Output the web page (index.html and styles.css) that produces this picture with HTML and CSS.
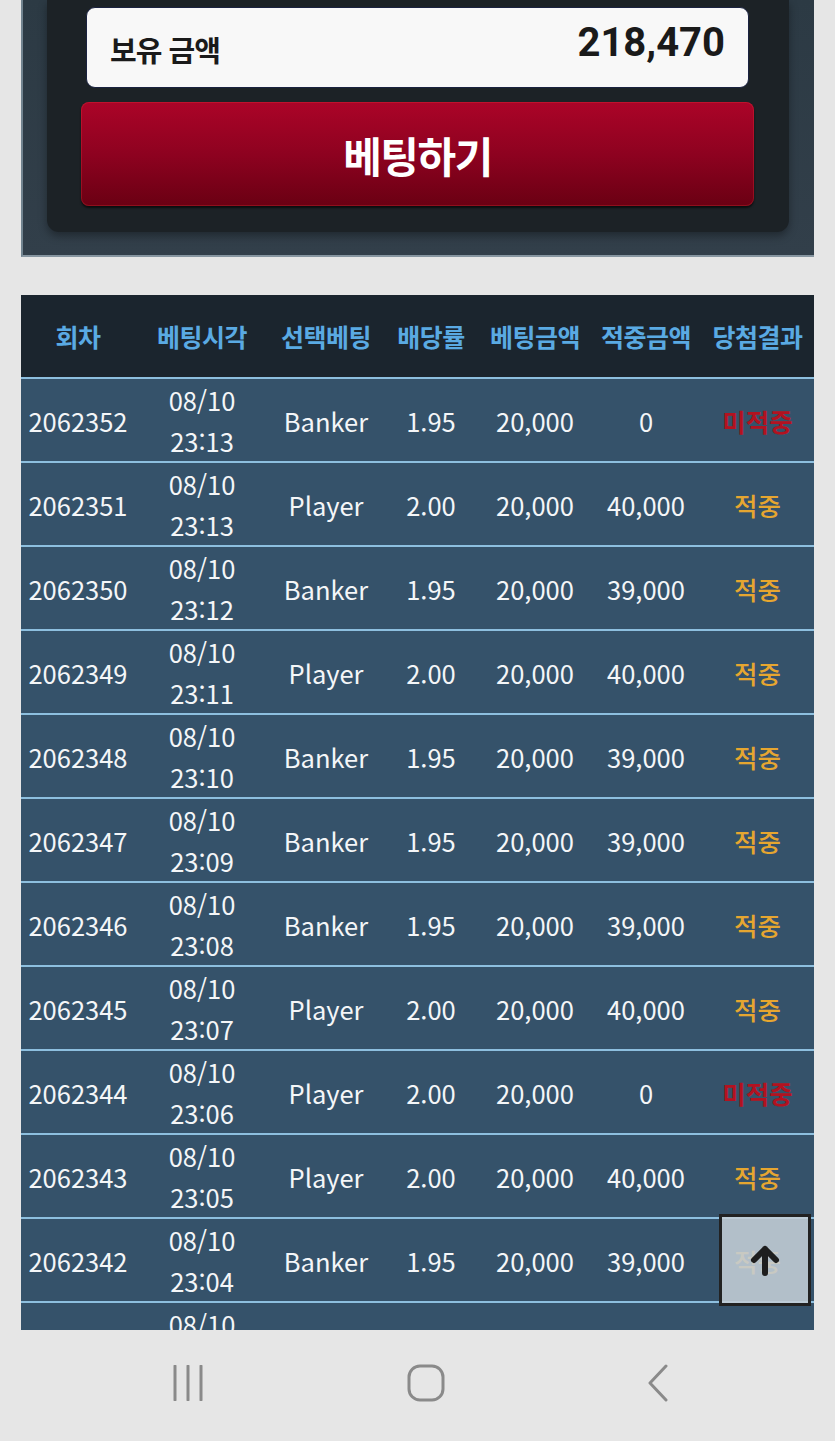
FILE: index.html
```html
<!DOCTYPE html>
<html lang="ko">
<head>
    <meta charset="UTF-8">
    <meta name="viewport" content="width=device-width, initial-scale=1.0">
    <title>베팅</title>
    <link rel="stylesheet" href="styles.css">
</head>
<body>
    <div class="bet-panel">
        <div class="bet-box">
            <div class="balance">
                <span class="balance-label">보유 금액</span>
                <span class="balance-value">218,470</span>
            </div>
            <button class="bet-btn">베팅하기</button>
        </div>
    </div>

    <div class="history">
        <table class="history-table">
            <colgroup>
                <col style="width: 114px">
                <col style="width: 134px">
                <col style="width: 114px">
                <col style="width: 96px">
                <col style="width: 112px">
                <col style="width: 110px">
                <col style="width: 113px">
            </colgroup>
            <thead>
                <tr>
                    <th>회차</th>
                    <th>베팅시각</th>
                    <th>선택베팅</th>
                    <th>배당률</th>
                    <th>베팅금액</th>
                    <th>적중금액</th>
                    <th>당첨결과</th>
                </tr>
            </thead>
            <tbody id="history-rows">
                <!-- rows generated below -->
            </tbody>
        </table>
    </div>

    <button class="top-btn" aria-label="맨 위로">
        <svg width="32" height="32" viewBox="0 0 32 32">
            <path d="M16 29 V5 M5 16 L16 5 L27 16" fill="none" stroke="#1e1e1e" stroke-width="6" stroke-linecap="round" stroke-linejoin="round"/>
        </svg>
    </button>

    <div class="nav-bar">
        <svg class="nav-icon" width="36" height="36" viewBox="0 0 36 36">
            <path d="M5 1 V35 M18 1 V35 M31 1 V35" stroke="#8a8a8a" stroke-width="3" stroke-linecap="round"/>
        </svg>
        <svg class="nav-icon" width="38" height="38" viewBox="0 0 38 38">
            <rect x="2" y="2" width="34" height="34" rx="11" fill="none" stroke="#8a8a8a" stroke-width="3"/>
        </svg>
        <svg class="nav-icon" width="24" height="38" viewBox="0 0 24 38">
            <path d="M20 2 L4 19 L20 36" fill="none" stroke="#8a8a8a" stroke-width="3" stroke-linecap="round" stroke-linejoin="round"/>
        </svg>
    </div>

    <script>
        const rows = [
            ['2062352', '23:13', 'Banker', '1.95', '20,000', '0', false],
            ['2062351', '23:13', 'Player', '2.00', '20,000', '40,000', true],
            ['2062350', '23:12', 'Banker', '1.95', '20,000', '39,000', true],
            ['2062349', '23:11', 'Player', '2.00', '20,000', '40,000', true],
            ['2062348', '23:10', 'Banker', '1.95', '20,000', '39,000', true],
            ['2062347', '23:09', 'Banker', '1.95', '20,000', '39,000', true],
            ['2062346', '23:08', 'Banker', '1.95', '20,000', '39,000', true],
            ['2062345', '23:07', 'Player', '2.00', '20,000', '40,000', true],
            ['2062344', '23:06', 'Player', '2.00', '20,000', '0', false],
            ['2062343', '23:05', 'Player', '2.00', '20,000', '40,000', true],
            ['2062342', '23:04', 'Banker', '1.95', '20,000', '39,000', true],
            ['2062341', '23:03', 'Banker', '1.95', '20,000', '39,000', true]
        ];

        const body = document.getElementById('history-rows');
        rows.forEach(r => {
            const tr = document.createElement('tr');
            const result = r[6]
                ? '<span class="win">적중</span>'
                : '<span class="lose">미적중</span>';
            tr.innerHTML =
                `<td>${r[0]}</td>` +
                `<td class="time">08/10<br>${r[1]}</td>` +
                `<td>${r[2]}</td>` +
                `<td>${r[3]}</td>` +
                `<td>${r[4]}</td>` +
                `<td>${r[5]}</td>` +
                `<td>${result}</td>`;
            body.appendChild(tr);
        });
    </script>
</body>
</html>
```

FILE: styles.css
```css
body {
    margin: 0;
    padding: 0;
    background: #e6e6e6;
    font-family: "Noto Sans CJK KR", "Noto Sans", sans-serif;
    overflow: hidden;
}
.bet-panel {
    margin: 0 21px;
    padding: 0 25px 23px 24px;
    background: linear-gradient(180deg, #2c3a44, #323f4a);
    border-left: 2px solid #71838f;
    border-bottom: 2px solid #8695a0;
}
.bet-box {
    background: #1c2226;
    border-radius: 0 0 12px 12px;
    padding: 7px 35px 26px 34px;
    box-shadow: 0 4px 8px rgba(0, 0, 0, 0.35);
}
.balance {
    display: flex;
    justify-content: space-between;
    align-items: center;
    height: 79px;
    margin: 0 5px;
    padding: 0 23px 0 23px;
    background: #f8f8f8;
    border: 1px solid #1a2240;
    border-radius: 9px;
    color: #1a1a1a;
}
.balance-label {
    font-size: 29px;
    font-weight: 700;
    margin-top: 2px;
    letter-spacing: -1px;
}
.balance-value {
    font-family: Roboto, "Noto Sans", sans-serif;
    font-size: 40px;
    font-weight: 700;
    margin-top: -10px;
}
.bet-btn {
    display: block;
    width: 100%;
    height: 104px;
    margin-top: 14px;
    border: none;
    border-radius: 8px;
    background: linear-gradient(180deg, #ab0428 0%, #8e0220 50%, #6a0013 100%);
    box-shadow: inset 0 0 0 1px rgba(255, 60, 60, 0.25), 0 2px 2px rgba(0, 0, 0, 0.6);
    color: #ffffff;
    font-family: "Noto Sans CJK KR", sans-serif;
    font-size: 42px;
    font-weight: 700;
    letter-spacing: -1.5px;
    padding-top: 2px;
}
.history {
    margin: 38px 21px 0;
    height: 1035px;
    overflow: hidden;
}
.history-table {
    width: 100%;
    table-layout: fixed;
    border-collapse: collapse;
    text-align: center;
}
.history-table th {
    height: 82px;
    padding: 0;
    background: #1b252e;
    color: #5aaae3;
    font-size: 25px;
    font-weight: 700;
    white-space: nowrap;
    letter-spacing: -0.5px;
}
.history-table td {
    height: 82px;
    padding: 0;
    background: #35526a;
    border-top: 2px solid #8dbfdf;
    color: #f4f6f8;
    font-size: 25.5px;
    line-height: 41px;
    white-space: nowrap;
}
.win {
    color: #e6a630;
    font-weight: 500;
}
.lose {
    color: #b21220;
    font-weight: 700;
}
.top-btn {
    position: fixed;
    right: 24px;
    bottom: 135px;
    width: 92px;
    height: 92px;
    padding: 0;
    border: 3px solid #222222;
    background: rgba(196, 206, 214, 0.88);
    display: flex;
    align-items: center;
    justify-content: center;
    cursor: pointer;
}
.nav-bar {
    height: 111px;
    display: flex;
    align-items: center;
    justify-content: space-between;
    padding: 0 165px 0 170px;
}
.nav-icon {
    display: block;
    margin-bottom: 6px;
}
```
